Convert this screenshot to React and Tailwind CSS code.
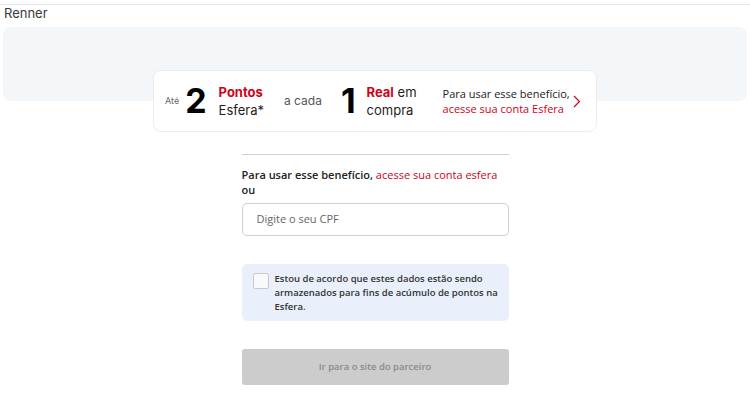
const red = "text-[#d0021b]";

const Header = () => (
  <div>
    <div className="h-[5px] border-b border-[#e6e6e6]" />
    <p className="px-[4px] text-[13px] leading-[17px] text-[#3a3a3a] font-['Inter',sans-serif]">Renner</p>
  </div>
);

const PointsCard = () => (
  <div className="relative z-10 mx-auto -mt-[31px] flex h-[62px] w-[444px] items-center whitespace-nowrap rounded-lg border border-[#ececec] bg-white pl-[11px] font-['Inter',sans-serif] text-[#222]">
    <span className="text-[9px] text-[#666]">Até</span>
    <span className="ml-[6px] text-[34px] font-bold leading-none text-black">2</span>
    <div className="ml-[12px] flex flex-col text-[13px] leading-[18px]">
      <span className={`font-bold ${red}`}>Pontos</span>
      <span>Esfera*</span>
    </div>
    <span className="ml-[20px] text-[12px] text-[#555]">a cada</span>
    <span className="ml-[19px] text-[34px] font-bold leading-none text-black">1</span>
    <div className="ml-[11px] flex flex-col text-[13px] leading-[18px]">
      <span>
        <span className={`font-bold ${red}`}>Real</span> em
      </span>
      <span>compra</span>
    </div>
    <div className="ml-[26px] flex flex-col font-['Open_Sans',sans-serif] text-[11px] leading-[15px]">
      <span>Para usar esse benefício,</span>
      <span className={red}>acesse sua conta Esfera</span>
    </div>
    <svg width="8" height="13" viewBox="0 0 8 13" className="ml-[3px]" fill="none">
      <path d="M1 1 L6.5 6.5 L1 12" stroke="#d0021b" strokeWidth="1.2" />
    </svg>
  </div>
);

const Form = () => (
  <div className="mx-auto mt-[22px] w-[267px] font-['Open_Sans',sans-serif]">
    <div className="border-t border-[#cfcfcf]" />
    <p className="mt-[12px] whitespace-nowrap text-[11px] font-semibold leading-[15px] text-[#222]">
      Para usar esse benefício, <span className={`font-normal ${red}`}>acesse sua conta esfera</span>
    </p>
    <p className="text-[11px] font-semibold leading-[15px] text-[#222]">ou</p>
    <div className="mt-[6px] flex h-[33px] items-center rounded-[5px] border border-[#cfcfcf] px-[14px] text-[11px] text-[#666]">
      Digite o seu CPF
    </div>
    <div className="mt-[28px] flex gap-[6px] rounded-[5px] bg-[#eaf0fb] pl-[11px] pr-[6px] pt-[8px] pb-[7px]">
      <div className="mt-[1px] h-[16px] w-[16px] shrink-0 rounded-[2px] border border-[#c9c9c9] bg-[#f8f9fb]" />
      <p className="text-[9.5px] font-semibold leading-[14px] text-[#333]">
        Estou de acordo que estes dados estão sendo armazenados para fins de acúmulo de pontos na Esfera.
      </p>
    </div>
    <div className="mt-[28px] flex h-[36px] items-center justify-center rounded-[3px] bg-[#cccccc] text-[9.5px] font-semibold text-[#8a8a8a]">
      Ir para o site do parceiro
    </div>
  </div>
);

export default function App() {
  return (
    <div className="h-[403px] w-[750px] overflow-hidden bg-white">
      <Header />
      <div className="mx-[3px] mt-[5px] h-[74px] rounded-lg bg-[#f4f7fa]" />
      <PointsCard />
      <Form />
    </div>
  );
}
